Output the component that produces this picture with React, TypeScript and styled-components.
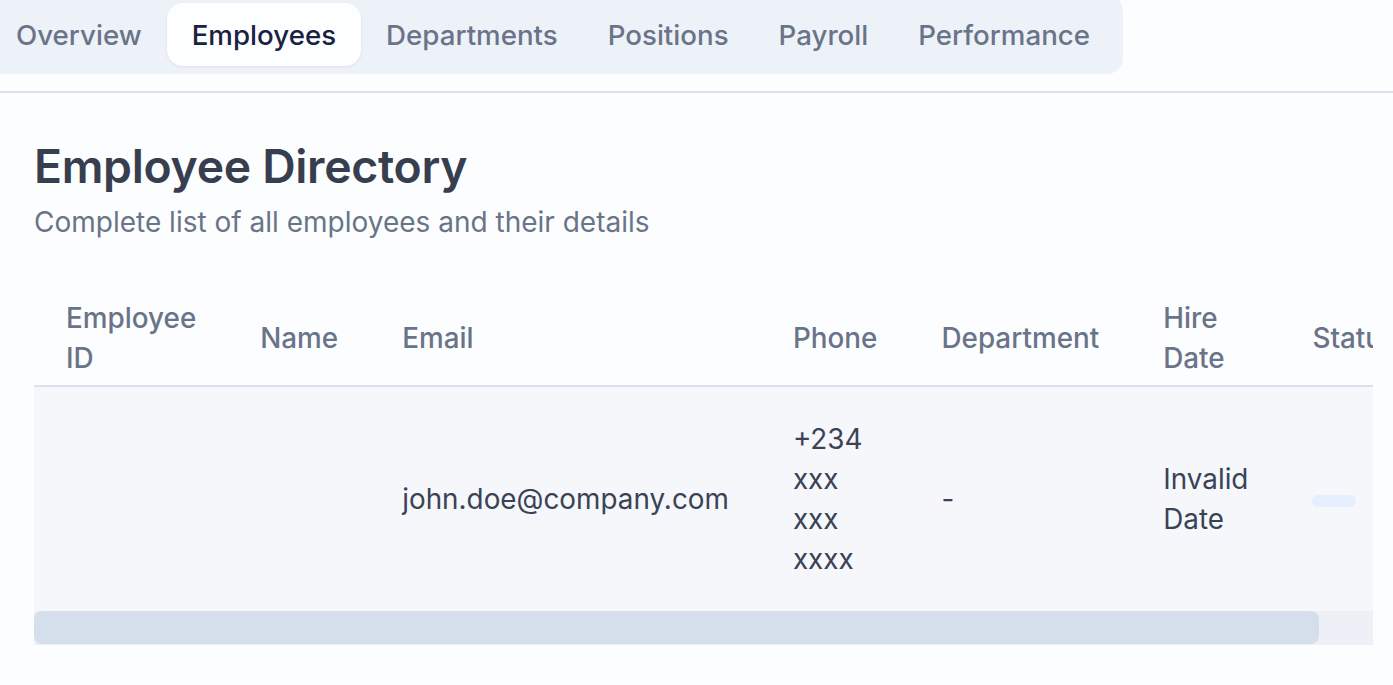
import { useLayoutEffect, useRef, useState } from 'react';
import styled, { createGlobalStyle } from 'styled-components';

const GlobalStyle = createGlobalStyle`
    html, body {
        margin: 0;
        padding: 0;
        background: #fcfdfe;
        overflow: hidden;
    }
    body {
        font-family: Inter, "Noto Sans", sans-serif;
    }
`;

const PageWrapper = styled.div`
    width: calc(100vw + 48px);
    margin: -5px 0 0 -17px;
    display: flex;
    flex-direction: column;
    align-items: flex-start;
`;
const TabBar = styled.div`
    display: inline-flex;
    padding: 8px;
    background: #edf1f8;
    border-radius: 16px;
`;
const Tab = styled.button<{ $active?: boolean }>`
    height: 63px;
    padding: 0 25px;
    border: none;
    border-radius: 16px;
    font-family: inherit;
    font-size: 27.7px;
    font-weight: 500;
    cursor: pointer;
    color: ${(p) => (p.$active ? '#19223f' : '#697489')};
    background: ${(p) => (p.$active ? '#fdfeff' : 'transparent')};
    box-shadow: ${(p) => (p.$active ? '0 1px 3px rgba(30, 50, 90, 0.08)' : 'none')};
`;
const Card = styled.div`
    align-self: stretch;
    margin-top: 17px;
    border: 2px solid #d8e2ee;
    border-radius: 16px;
    background: #fcfdfe;
    padding: 44px 49px 60px 49px;
`;
const TitleText = styled.h1`
    margin: 0;
    color: #373f4f;
    font-size: 46.3px;
    font-weight: 600;
    line-height: 58px;
    letter-spacing: -0.3px;
`;
const InfoText = styled.p`
    margin: 7px 0 0;
    color: #697489;
    font-size: 28px;
    line-height: 40px;
`;
const TableBox = styled.div`
    margin-top: 53px;
`;
const TableScroll = styled.div`
    overflow: hidden;
`;
const Table = styled.table`
    width: 100%;
    border-collapse: collapse;
    font-size: 27.85px;
    line-height: 40px;
`;
const HeadCell = styled.th`
    padding: 3px 32px 7px;
    text-align: left;
    vertical-align: middle;
    font-weight: 500;
    color: #697489;
    border-bottom: 2px solid #d8e2ee;
`;
const BodyRow = styled.tr`
    background: #f5f7fb;
`;
const Cell = styled.td`
    padding: 32px;
    vertical-align: middle;
    color: #3a4356;
`;
const StatusBadge = styled.span`
    display: inline-block;
    width: 44px;
    height: 12px;
    border-radius: 999px;
    background: #e6effd;
    vertical-align: middle;
`;
const ScrollTrack = styled.div`
    height: 34px;
    background: #edf1f7;
`;
const ScrollThumb = styled.div`
    height: 33px;
    background: #d5dfeb;
    border-radius: 8px;
`;

const tabs = ['Overview', 'Employees', 'Departments', 'Positions', 'Payroll', 'Performance'];
const columns = ['Employee ID', 'Name', 'Email', 'Phone', 'Department', 'Hire Date', 'Status'];

export default function App() {
    const scrollRef = useRef<HTMLDivElement>(null);
    const [thumbPct, setThumbPct] = useState(95.8);

    useLayoutEffect(() => {
        const el = scrollRef.current;
        if (el && el.scrollWidth > 0) {
            setThumbPct(Math.min(100, (el.clientWidth / el.scrollWidth) * 100));
        }
    }, []);

    return (
        <>
            <GlobalStyle />
            <PageWrapper>
                <TabBar>
                    {tabs.map((t) => (
                        <Tab key={t} $active={t === 'Employees'}>
                            {t}
                        </Tab>
                    ))}
                </TabBar>
                <Card>
                    <TitleText>Employee Directory</TitleText>
                    <InfoText>Complete list of all employees and their details</InfoText>
                    <TableBox>
                        <TableScroll ref={scrollRef}>
                            <Table>
                                <thead>
                                    <tr>
                                        {columns.map((c) => (
                                            <HeadCell key={c}>{c}</HeadCell>
                                        ))}
                                    </tr>
                                </thead>
                                <tbody>
                                    <BodyRow>
                                        <Cell></Cell>
                                        <Cell></Cell>
                                        <Cell>john.doe@company.com</Cell>
                                        <Cell>+234 xxx xxx xxxx</Cell>
                                        <Cell>-</Cell>
                                        <Cell>Invalid Date</Cell>
                                        <Cell>
                                            <StatusBadge />
                                        </Cell>
                                    </BodyRow>
                                </tbody>
                            </Table>
                        </TableScroll>
                        <ScrollTrack>
                            <ScrollThumb style={{ width: `${thumbPct}%` }} />
                        </ScrollTrack>
                    </TableBox>
                </Card>
            </PageWrapper>
        </>
    );
}
